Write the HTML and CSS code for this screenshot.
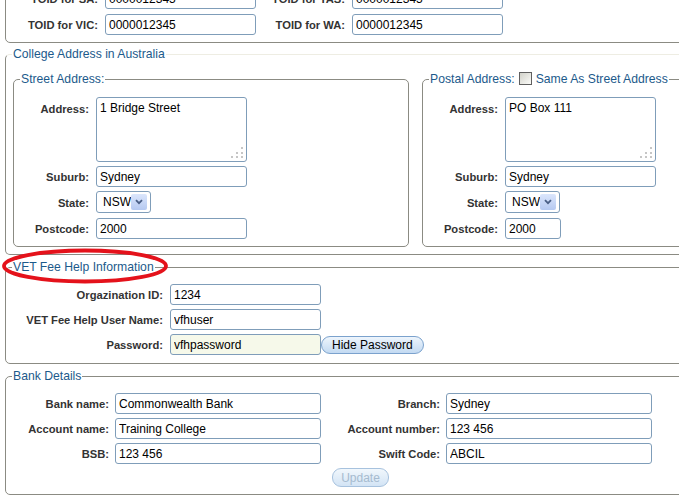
FILE: index.html
```html
<!DOCTYPE html>
<html>
<head>
<meta charset="utf-8">
<title>College Settings</title>
<link rel="stylesheet" href="styles.css">
</head>
<body>
<div class="page">
  <fieldset class="fs fs-toid">
    <div class="toid-grid">
      <label class="lbl">TOID for SA:</label><input class="inp" value="0000012345">
      <label class="lbl">TOID for TAS:</label><input class="inp" value="0000012345">
      <label class="lbl">TOID for VIC:</label><input class="inp" value="0000012345">
      <label class="lbl">TOID for WA:</label><input class="inp" value="0000012345">
    </div>
  </fieldset>

  <fieldset class="fs fs-college">
    <legend>College Address in Australia</legend>
    <div class="addr-cols">
      <fieldset class="fs fs-street">
        <legend>Street Address:</legend>
        <div class="addr-grid">
          <label class="lbl lbl-top">Address:</label>
          <div class="ta-wrap"><textarea class="ta">1 Bridge Street</textarea><svg class="grip" width="13" height="12" viewBox="0 0 13 12"><rect x="11" y="1" width="2" height="2"/><rect x="6" y="6" width="2" height="2"/><rect x="11" y="6" width="2" height="2"/><rect x="1" y="10" width="2" height="2"/><rect x="6" y="10" width="2" height="2"/><rect x="11" y="10" width="2" height="2"/></svg></div>
          <label class="lbl">Suburb:</label><input class="inp" value="Sydney">
          <label class="lbl">State:</label>
          <div class="select"><span>NSW</span><span class="arrow"><svg width="8" height="6" viewBox="0 0 8 6"><path d="M1 1.2 L4 4.2 L7 1.2" fill="none" stroke="#4a5f86" stroke-width="1.8"/></svg></span></div>
          <label class="lbl">Postcode:</label><input class="inp" value="2000">
        </div>
      </fieldset>
      <fieldset class="fs fs-postal">
        <legend>Postal Address:<input type="checkbox" class="chk">Same As Street Address</legend>
        <div class="addr-grid">
          <label class="lbl lbl-top">Address:</label>
          <div class="ta-wrap"><textarea class="ta">PO Box 111</textarea><svg class="grip" width="13" height="12" viewBox="0 0 13 12"><rect x="11" y="1" width="2" height="2"/><rect x="6" y="6" width="2" height="2"/><rect x="11" y="6" width="2" height="2"/><rect x="1" y="10" width="2" height="2"/><rect x="6" y="10" width="2" height="2"/><rect x="11" y="10" width="2" height="2"/></svg></div>
          <label class="lbl">Suburb:</label><input class="inp" value="Sydney">
          <label class="lbl">State:</label>
          <div class="select"><span>NSW</span><span class="arrow"><svg width="8" height="6" viewBox="0 0 8 6"><path d="M1 1.2 L4 4.2 L7 1.2" fill="none" stroke="#4a5f86" stroke-width="1.8"/></svg></span></div>
          <label class="lbl">Postcode:</label><input class="inp inp-short" value="2000">
        </div>
      </fieldset>
    </div>
  </fieldset>

  <fieldset class="fs fs-vet">
    <legend>VET Fee Help Information</legend>
    <div class="vet-grid">
      <label class="lbl">Orgazination ID:</label><input class="inp" value="1234"><span></span>
      <label class="lbl">VET Fee Help User Name:</label><input class="inp" value="vfhuser"><span></span>
      <label class="lbl">Password:</label><input class="inp inp-pw" value="vfhpassword"><button class="btn">Hide Password</button>
    </div>
  </fieldset>

  <fieldset class="fs fs-bank">
    <legend>Bank Details</legend>
    <div class="bank-grid">
      <label class="lbl">Bank name:</label><input class="inp" value="Commonwealth Bank">
      <label class="lbl">Branch:</label><input class="inp" value="Sydney">
      <label class="lbl">Account name:</label><input class="inp" value="Training College">
      <label class="lbl">Account number:</label><input class="inp" value="123 456">
      <label class="lbl">BSB:</label><input class="inp" value="123 456">
      <label class="lbl">Swift Code:</label><input class="inp" value="ABCIL">
    </div>
    <div class="update-row"><button class="btn btn-update" disabled>Update</button></div>
  </fieldset>

  <svg class="annot" width="172" height="40" viewBox="0 0 172 40"><ellipse cx="85" cy="20" rx="81" ry="15.5" fill="none" stroke="#e4121b" stroke-width="3.8"/></svg>
</div>
</body>
</html>
```

FILE: styles.css
```css
* { box-sizing: border-box; }
html, body { margin: 0; background: #fff; overflow: hidden; }
body { font-family: "Liberation Sans", Arial, sans-serif; color: #000; }

.page {
  position: relative;
  width: 716px;
  padding-left: 5px;
  margin-top: -23px;
}

.fs {
  margin: 0;
  padding: 0;
  border: 1px solid #8b8b83;
  border-radius: 5px;
  min-width: 0;
}
.fs legend {
  margin-left: 6px;
  padding: 0 1px;
  font-size: 12.2px;
  line-height: 14px;
  height: 14px;
  color: #1c5a8b;
  white-space: nowrap;
}

.lbl {
  font-size: 11.2px;
  font-weight: bold;
  color: #333;
  text-align: right;
  padding-right: 7px;
  align-self: center;
  white-space: nowrap;
}
.lbl-top { align-self: start; padding-top: 6px; }

.inp {
  width: 151px;
  height: 21px;
  margin: 0;
  border: 1px solid #7f9db9;
  border-radius: 3px;
  padding: 0 3px;
  font-family: "Liberation Sans", Arial, sans-serif;
  font-size: 12px;
  color: #000;
  background: #fff;
  outline: none;
}
.inp-short { width: 56px; }
.inp-pw { background: #f6f9ea; }

/* TOID block */
.toid-grid {
  display: grid;
  grid-template-columns: 99px 151px 96px 151px;
  row-gap: 5px;
  padding: 10px 0 7px 0;
}

/* College address */
.fs-college { margin-top: 4px; border-top-color: #eeede3; }
.addr-cols {
  display: flex;
  gap: 13px;
  padding: 11px 7px 7px 7px;
}
.fs-street { width: 396px; flex: none; }
.fs-postal { flex: 1; }
.chk {
  -webkit-appearance: none;
  appearance: none;
  width: 13px;
  height: 13px;
  margin: 0 4px 0 4px;
  vertical-align: top;
  border: 1px solid #5f5f5f;
  background: linear-gradient(135deg, #d2d2ca, #fbfbf8);
}

.addr-grid {
  display: grid;
  grid-template-columns: 82px auto;
  row-gap: 4px;
  justify-items: start;
  padding: 11px 0 7px 0;
}
.addr-grid .lbl { justify-self: stretch; }

.ta-wrap { position: relative; width: 151px; height: 65px; }
.ta {
  display: block;
  width: 151px;
  height: 65px;
  margin: 0;
  border: 1px solid #7f9db9;
  border-radius: 3px;
  padding: 3px 3px;
  font-family: "Liberation Sans", Arial, sans-serif;
  font-size: 12px;
  line-height: 14px;
  resize: none;
  overflow: hidden;
  outline: none;
  color: #000;
}
.grip { position: absolute; right: 4px; bottom: 4px; fill: #c6c6c6; }

.select {
  width: 55px;
  height: 22px;
  margin-bottom: 1px;
  border: 1px solid #7f9db9;
  border-radius: 3px;
  display: flex;
  align-items: center;
  justify-content: space-between;
  padding: 0 3px 0 6px;
  font-size: 12px;
  background: #fff;
}
.arrow {
  width: 16px;
  height: 16px;
  border-radius: 2px;
  background: linear-gradient(#dbe6fc, #b5c9f1);
  display: flex;
  align-items: center;
  justify-content: center;
}

/* VET */
.fs-vet { margin-top: 5px; }
.vet-grid {
  display: grid;
  grid-template-columns: 164px 151px auto;
  row-gap: 4px;
  justify-items: start;
  padding: 10px 0 8px 0;
}
.vet-grid .lbl { justify-self: stretch; }

.btn {
  height: 18px;
  padding: 0 10px;
  margin: 0;
  align-self: center;
  border: 1px solid #7ba2cd;
  border-radius: 9px;
  background: linear-gradient(#eef5fc, #c3daf2);
  font-family: "Liberation Sans", Arial, sans-serif;
  font-size: 12px;
  line-height: 16px;
  color: #000;
}
.btn-update {
  height: 19px;
  padding: 0 8px;
  color: #a6bbcf;
  border-color: #a7c2de;
  background: linear-gradient(#f1f7fc, #d3e4f5);
}

/* Bank */
.fs-bank { margin-top: 5px; }
.bank-grid {
  display: grid;
  grid-template-columns: 109px 206px 125px 206px;
  row-gap: 4px;
  padding: 10px 0 0 0;
}
.bank-grid .lbl { padding-right: 6px; }
.bank-grid .inp { width: 206px; }
.update-row {
  display: flex;
  justify-content: center;
  padding: 4px 0 7px 0;
}

.annot {
  position: absolute;
  left: 0;
  top: 269px;
}
```
